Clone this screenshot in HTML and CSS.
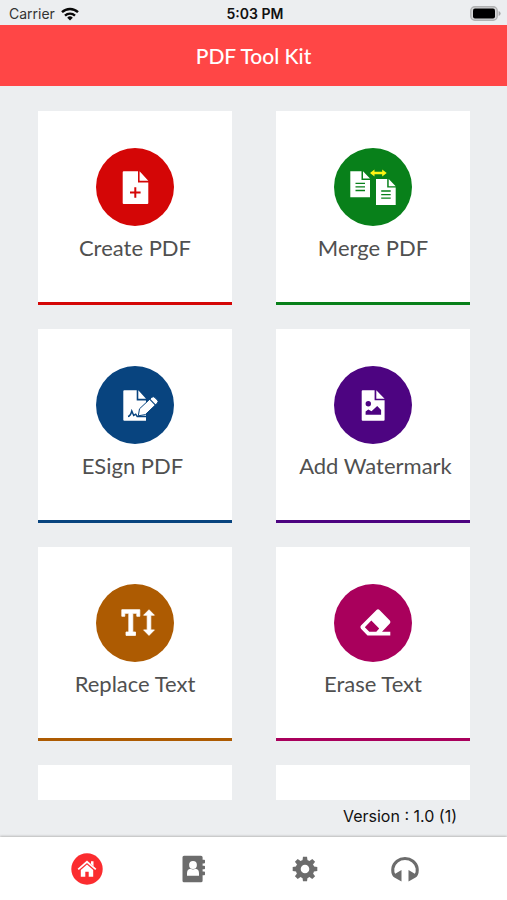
FILE: index.html
```html
<!DOCTYPE html>
<html lang="en">
<head>
<meta charset="utf-8">
<meta name="viewport" content="width=device-width, initial-scale=1">
<title>PDF Tool Kit</title>
<link rel="stylesheet" href="styles.css">
</head>
<body>
<div class="status">
  <div class="carrier"><span>Carrier</span>
    <svg width="18" height="14" viewBox="0 0 18 14" fill="none" stroke="#080808" stroke-width="2.4"><path d="M1 5.2a11.6 11.6 0 0 1 16 0M4 8.6a7.3 7.3 0 0 1 10 0"/><path d="M9 13.4 6.2 10.7a4 4 0 0 1 5.6 0z" fill="#080808" stroke="none"/></svg>
  </div>
  <span class="clock">5:03 PM</span>
  <svg class="battery" width="31" height="15" viewBox="0 0 31 15"><rect x=".8" y=".8" width="26.4" height="13.4" rx="4" fill="#d6d7d8" stroke="#b0b1b2" stroke-width="1.4"/><rect x="3" y="2.6" width="22" height="9.8" rx="2" fill="#000"/><path d="M28.6 5v5q2-.8 2-2.5T28.600 5z" fill="#a5a6a7"/></svg>
</div>
<header class="topbar"><h1>PDF Tool Kit</h1></header>
<main class="tools">
  <button class="card red">
    <svg class="disc" viewBox="0 0 78 78"><path fill="#fff" d="M27.700 23.300H42V34.600H52.300V55a1 1 0 0 1-1 1H27.700a1 1 0 0 1-1-1V24.300a1 1 0 0 1 1-1zM43.600 23.300 52.300 32.700H43.600z"/><path d="M34 44.500h10.600M39.300 39.200v10.600" stroke="#d40606" stroke-width="2"/></svg>
    <span>Create PDF</span>
  </button>
  <button class="card green">
    <svg class="disc" viewBox="0 0 78 78"><defs><g id="sheet"><path fill="#fff" d="M0 0h11.200v8.600h8.500V26H0zM12.700 0l7 7.200h-7z"/><path d="M5.200 12h9.500M5.200 15.600h9.500M5.200 19.200h9.500" stroke="#08801a" stroke-width="1.300"/></g></defs><use href="#sheet" x="16.300" y="23.300"/><use href="#sheet" x="42" y="31"/><path fill="#fff314" d="m36 25 4.500-3.600v2.400h7.700v-2.400l4.500 3.600-4.500 3.600v-2.400h-7.700v2.400z"/></svg>
    <span>Merge PDF</span>
  </button>
  <button class="card blue">
    <svg class="disc" viewBox="0 0 78 78"><path fill="#fff" d="M28.300 24.300H40.700V34.400H50V54.700H28.300a1 1 0 0 1-1-1V25.300a1 1 0 0 1 1-1zM42.300 24.300l7.700 8.500h-7.700z"/><path d="M32 50.500q2.500-.5 3.800-5.500l1.900 4.500 2-1.300 1.500 2.300h9" fill="none" stroke="#08447f" stroke-width="1.500"/><path d="m42.300 49.800 1.200-7L55.800 31.300q1.500-1.300 3 .2l2.600 2.600q1.400 1.500 0 3L49.300 48.600z" fill="#fff" stroke="#08447f" stroke-width="1"/><path d="m53.700 33.200 5.800 5.900" stroke="#08447f" stroke-width="1.200"/></svg>
    <span>ESign PDF&nbsp;</span>
  </button>
  <button class="card purple">
    <svg class="disc" viewBox="0 0 78 78"><path fill="#fff" d="M28.700 24.300H40.600V34.300H50.600V53.700a1 1 0 0 1-1 1H28.700a1 1 0 0 1-1-1V25.300a1 1 0 0 1 1-1zM42.300 24.300l8.300 8.400h-8.300z"/><circle cx="34.300" cy="37.700" r="2.700" fill="#4d0481"/><path d="M31.600 48.800v-3.200l2.700-2.200 3.200 1.800 5.700-5.300 3.900 4v4.900z" fill="#4d0481"/></svg>
    <span>&nbsp;Add Watermark</span>
  </button>
  <button class="card orange">
    <svg class="disc" viewBox="0 0 78 78"><path fill="#fff" stroke="#fff" stroke-width=".8" stroke-linejoin="round" d="M25.800 25.700h18v6.600h-3v-3h-4V48h2.700v3.400h-9.500V48h2.800V29.300h-4v3h-3z"/><path fill="#fff" stroke="#fff" stroke-width=".8" stroke-linejoin="round" d="m53 25.700 5.400 5.500h-3.600v14.700h3.600L53 51.400l-5.400-5.500h3.600V31.200h-3.600z"/></svg>
    <span>Replace Text</span>
  </button>
  <button class="card pink">
    <svg class="disc" viewBox="0 0 78 78"><path fill="#fff" fill-rule="evenodd" d="M42.500 26q1.500-1.300 3 0l10.300 10.400q1.400 1.600 0 3L48 47.700h8.300v3.700H33.500L27 44.800q-1.400-1.600 0-3.200zM37.300 36.500 30.800 43.200l4.500 4.500h7l2.900-3.300z"/></svg>
    <span>Erase Text</span>
  </button>
  <div class="card"></div>
  <div class="card"></div>
</main>
<p class="version">Version : 1.0 (1)</p>
<nav class="tabs">
  <a href="#home" class="home" aria-label="Home"><svg width="32" height="32" viewBox="0 0 32 32"><circle cx="16" cy="16" r="15.700" fill="#fb2c2f"/><path d="m7.200 16.400 8.800-7.600 8.800 7.600" fill="none" stroke="#fff" stroke-width="1.800"/><path fill="#fff" d="M20 8.300h2.500v5L20 11zM9.800 17l6.200-5.400 6.200 5.400v6.700h-4.500v-4.900h-3.400v4.900H9.800z"/></svg></a>
  <a href="#contacts" aria-label="Contacts"><svg width="24" height="28" viewBox="0 0 24 28"><path fill="#6c6c6c" d="M2 .7h17q1.600 0 1.600 1.600v2.500h1.600q.8 0 .8.800v2q0 .8-.8.800h-1.600v2.300h1.600q.8 0 .8.800v2q0 .8-.8.800h-1.600v2.300h1.600q.8 0 .8.800v2q0 .8-.8.800h-1.600v5.500q0 1.600-1.600 1.600H2q-1.500 0-1.500-1.600V2.300Q.5.700 2 .700z"/><circle cx="11" cy="10" r="3.900" fill="#fff"/><path fill="#fff" d="M5 20.800v-2.600q0-4 3.500-4.400 2.500 1.300 5 0 3.500.4 3.500 4.400v2.600z"/></svg></a>
  <a href="#settings" aria-label="Settings"><svg width="26" height="26" viewBox="-13 -13 26 26"><defs><path id="tooth" d="M-2.700-7.500-2-12.300h4l.7 4.800z"/></defs><g fill="#6c6c6c"><use href="#tooth"/><use href="#tooth" transform="rotate(45)"/><use href="#tooth" transform="rotate(90)"/><use href="#tooth" transform="rotate(135)"/><use href="#tooth" transform="rotate(180)"/><use href="#tooth" transform="rotate(225)"/><use href="#tooth" transform="rotate(270)"/><use href="#tooth" transform="rotate(315)"/></g><circle r="6.800" fill="none" stroke="#6c6c6c" stroke-width="5"/></svg></a>
  <a href="#support" aria-label="Support"><svg width="30" height="26" viewBox="0 0 30 26"><path d="M4.500 20A12.300 11.500 0 1 1 25.500 20" fill="none" stroke="#6c6c6c" stroke-width="3"/><path fill="#6c6c6c" d="M11.500 14v11.500L4 21.300q-1.500-1.500-.5-2.500zM18.500 14v11.500l7.500-4.200q1.500-1.500.5-2.500z"/></svg></a>
</nav>
</body>
</html>
```
FILE: styles.css
```css
* {
  box-sizing: border-box;
}

body {
  margin: 0;
  height: 100vh;
  display: flex;
  flex-direction: column;
  background: #eceef0;
  font-family: Inter, "Liberation Sans", sans-serif;
  color: #111;
}

.status {
  flex: none;
  height: 25px;
  padding: 2px 6px 0 9px;
  display: grid;
  grid-template-columns: 1fr auto 1fr;
  align-items: center;
  font-size: 14px;
  line-height: 20px;
}

.carrier {
  display: flex;
  align-items: center;
  gap: 6px;
  color: #333;
}

.clock {
  font-weight: 600;
}

.battery {
  justify-self: end;
}

.topbar {
  flex: none;
  height: 61px;
  display: flex;
  align-items: center;
  justify-content: center;
  background: #ff4646;
  color: #fff;
}

.topbar h1 {
  margin: 0;
  font: 500 21px/24px Lato, sans-serif;
}

.tools {
  flex: 1;
  min-height: 0;
  margin-top: 25px;
  padding: 0 37px 0 38px;
  display: grid;
  grid-template-columns: 1fr 1fr;
  grid-auto-rows: 194px;
  gap: 24px 44px;
  overflow-y: auto;
  scrollbar-width: none;
}

.card {
  display: flex;
  flex-direction: column;
  align-items: center;
  gap: 8px;
  padding: 37px 0 0;
  border: 0;
  border-bottom: 3px solid var(--accent, #fff);
  background: #fff;
  color: #505050;
  font: 400 22px/28px Lato, sans-serif;
}

.disc {
  flex: none;
  width: 78px;
  height: 78px;
  border-radius: 50%;
  background: var(--accent);
}

.red { --accent: #d40606; }
.green { --accent: #08801a; }
.blue { --accent: #08447f; }
.purple { --accent: #4d0481; }
.orange { --accent: #ad5b02; }
.pink { --accent: #a9005c; }

.version {
  flex: none;
  margin: 0;
  padding: 6px 50px 11px;
  text-align: right;
  font-size: 16px;
  line-height: 20px;
}

.tabs {
  flex: none;
  height: 63px;
  padding: 0 59px 0 33px;
  display: grid;
  grid-template-columns: 108fr 106fr 115fr 86fr;
  align-items: center;
  justify-items: center;
  background: #fff;
  box-shadow: 0 -1px 2px #bbb;
}

.tabs a,
.tabs svg {
  display: block;
}
```
